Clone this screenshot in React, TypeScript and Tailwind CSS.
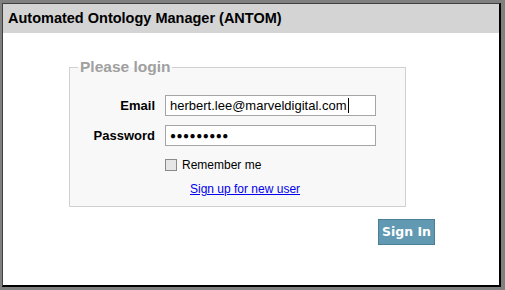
import React from "react";

export default function App() {
  return (
    <div
      className="w-[505px] h-[290px] bg-[#808080] pt-[3px] pl-[2px] pr-[4px] pb-[3px]"
      style={{ fontFamily: '"Liberation Sans", Arial, sans-serif' }}
    >
      <div className="h-full bg-white border-l border-t border-l-[#404040] border-t-[#404040] border-r-2 border-b-2 border-r-black border-b-black flex flex-col">
        <div className="h-[29px] bg-[#d4d4d4] flex items-center pl-[5px] pt-px text-[14.5px] font-bold text-black">
          Automated Ontology Manager (ANTOM)
        </div>
        <div className="pl-[66px] pt-[26px] w-[432px] flex flex-col">
          <fieldset className="w-[337px] border border-[#d0d0d0] bg-[#f8f8f8] px-0 pt-[20px] pb-[8px] m-0">
            <legend className="ml-[8px] px-[2px] text-[15.5px] font-bold text-[#a0a0a0] leading-[16px]">
              Please login
            </legend>
            <div className="grid grid-cols-[85px_211px] gap-x-[10px] gap-y-[9px] items-center">
              <div className="text-right text-[13px] font-bold text-black">Email</div>
              <div className="h-[21px] border border-[#a5a5a5] bg-white flex items-center pl-[4px] text-[13px] text-black">
                herbert.lee@marveldigital.com
                <span className="inline-block w-px h-[15px] bg-black ml-px" />
              </div>
              <div className="text-right text-[13px] font-bold text-black">Password</div>
              <div className="h-[21px] border border-[#a5a5a5] bg-white flex items-center pl-[4px] text-[10px] text-black tracking-[0.5px]">
                ●●●●●●●●●
              </div>
            </div>
            <div className="ml-[95px] mt-[10px] flex items-center gap-[5px] text-[12px] text-black">
              <span className="w-[12px] h-[12px] border border-[#8a8a8a] bg-[#e6e6e6] inline-block" />
              <span>Remember me</span>
            </div>
            <div className="ml-[120px] mt-[6px] text-[12px]">
              <a href="#" className="text-[#0000ee] underline">Sign up for new user</a>
            </div>
          </fieldset>
          <div className="flex justify-end w-[366px] mt-[12px]">
            <button
              className="w-[57px] h-[26px] bg-[#6199b2] border border-[#4b7f94] text-white font-bold text-[12.5px]"
              style={{ fontFamily: '"DejaVu Sans", Verdana, sans-serif' }}
            >
              Sign In
            </button>
          </div>
        </div>
      </div>
    </div>
  );
}
